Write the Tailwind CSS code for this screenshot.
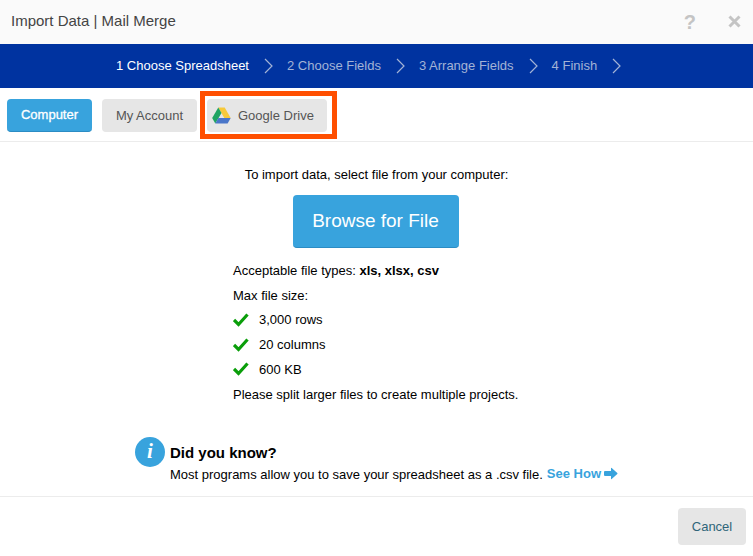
<!DOCTYPE html>
<html lang="en">
<head>
  <meta charset="UTF-8" />
  <title>Import Data | Mail Merge</title>
  <script src="https://cdn.jsdelivr.net/npm/@tailwindcss/browser@4"></script>
</head>
<body class="bg-white font-['Liberation_Sans',Arial,sans-serif] text-[13px] text-black">
  <div class="relative h-[556px] w-[753px] overflow-hidden">

    <!-- title bar -->
    <div class="flex h-[44px] items-center justify-between bg-[#fafafa] pb-[1px] pl-[11px] pr-[12px]">
      <h1 class="text-[15px] text-[#444]">Import Data | Mail Merge</h1>
      <div class="flex items-center gap-[32px] text-[#c4c4c4]">
        <span class="text-[20px] font-bold leading-none">?</span>
        <svg width="13" height="13" viewBox="0 0 13 13"><path d="M1.5 1.5l10 10M11.5 1.5l-10 10" stroke="#c4c4c4" stroke-width="3" fill="none"/></svg>
      </div>
    </div>

    <!-- steps -->
    <div class="flex h-[44px] items-center bg-[#0033a0] pl-[116px] text-[13px] text-[#a3b3d6]">
      <span class="text-white">1 Choose Spreadsheet</span>
      <svg class="ml-[15px] mr-[14px]" width="9" height="16" viewBox="0 0 9 16"><path d="M1 1l7 7-7 7" stroke="#a3b3d6" stroke-width="1.2" fill="none"/></svg>
      <span>2 Choose Fields</span>
      <svg class="ml-[15px] mr-[14px]" width="9" height="16" viewBox="0 0 9 16"><path d="M1 1l7 7-7 7" stroke="#a3b3d6" stroke-width="1.2" fill="none"/></svg>
      <span>3 Arrange Fields</span>
      <svg class="ml-[15px] mr-[14px]" width="9" height="16" viewBox="0 0 9 16"><path d="M1 1l7 7-7 7" stroke="#a3b3d6" stroke-width="1.2" fill="none"/></svg>
      <span>4 Finish</span>
      <svg class="ml-[15px]" width="9" height="16" viewBox="0 0 9 16"><path d="M1 1l7 7-7 7" stroke="#a3b3d6" stroke-width="1.2" fill="none"/></svg>
    </div>

    <!-- source tabs -->
    <div class="flex h-[54px] items-start gap-[10px] border-b border-[#ececec] pl-[7px] pt-[11px]">
      <button class="h-[33px] w-[85px] rounded-[4px] border-b border-[#2b8cc4] bg-[#38a3dd] text-white [-webkit-text-stroke:0.3px_white]">Computer</button>
      <button class="h-[33px] w-[95px] rounded-[4px] bg-[#e6e6e6] text-[#555]">My Account</button>
      <button class="flex h-[33px] w-[120px] items-center rounded-[4px] bg-[#e6e6e6] pl-[5px] text-[#555]">
        <svg width="19" height="17" viewBox="0 0 19 17">
          <path d="M6.3 0.5h6.4l6 10.4h-6.4z" fill="#f7c93a"/>
          <path d="M6.3 0.5l3.2 5.5-6.2 10.5L0.2 11z" fill="#1fa463"/>
          <path d="M3.3 16.5l3.1-5.6h12.3l-3.1 5.6z" fill="#4a76c9"/>
        </svg>
        <span class="ml-[7px]">Google Drive</span>
      </button>
    </div>

    <!-- highlight around Google Drive -->
    <div class="absolute left-[200px] top-[91px] h-[48px] w-[137px] border-[5px] border-[#ff4f00]"></div>

    <!-- main -->
    <div class="flex flex-col items-center pt-[24px]">
      <p class="h-[18px] leading-[18px]">To import data, select file from your computer:</p>
      <button class="mr-[2px] mt-[11px] h-[53px] w-[166px] rounded-[4px] border-b border-[#2b8cc4] bg-[#38a3dd] text-[19px] text-white">Browse for File</button>
    </div>

    <div class="ml-[233px] mt-[10.8px] leading-[24.8px]">
      <p>Acceptable file types: <b>xls, xlsx, csv</b></p>
      <p>Max file size:</p>
      <ul>
        <li class="flex items-center">
          <svg class="-mt-[2px] w-[26px]" width="16" height="14" viewBox="0 0 26 14"><path d="M1 7l4.5 4.5L14.5 1.5" stroke="#0a9e0a" stroke-width="3.2" fill="none"/></svg>3,000 rows
        </li>
        <li class="flex items-center">
          <svg class="-mt-[2px] w-[26px]" width="16" height="14" viewBox="0 0 26 14"><path d="M1 7l4.5 4.5L14.5 1.5" stroke="#0a9e0a" stroke-width="3.2" fill="none"/></svg>20 columns
        </li>
        <li class="flex items-center">
          <svg class="-mt-[2px] w-[26px]" width="16" height="14" viewBox="0 0 26 14"><path d="M1 7l4.5 4.5L14.5 1.5" stroke="#0a9e0a" stroke-width="3.2" fill="none"/></svg>600 KB
        </li>
      </ul>
      <p>Please split larger files to create multiple projects.</p>
    </div>

    <!-- did you know -->
    <div class="ml-[135px] mt-[24px] flex h-[64.2px] items-start gap-[5px]">
      <div class="mt-[5.2px] flex h-[30px] w-[30px] items-center justify-center rounded-full bg-[#38a3dd] font-['Liberation_Serif',serif] text-[21px] font-bold italic leading-none text-white">i</div>
      <div class="pt-[12.2px]">
        <p class="text-[15px] font-bold leading-[18px]">Did you know?</p>
        <p class="mt-[5px] flex items-center leading-[16px]">Most programs allow you to save your spreadsheet as a .csv file.
          <a class="relative -top-[1px] ml-[4px] flex items-center font-bold text-[#38a3dd]">See How
            <svg class="ml-[3px]" width="14" height="13" viewBox="0 0 14 13"><path d="M1 4h6V1.2q0-.8.7-.3l5.6 5.2q.4.4 0 .8L7.7 12.1q-.7.5-.7-.3V9H1q-1 0-1-1V5q0-1 1-1z" fill="#38a3dd"/></svg>
          </a>
        </p>
      </div>
    </div>

    <!-- footer -->
    <div class="flex justify-end border-t border-[#ececec] pr-[7px] pt-[11px]">
      <button class="h-[37px] w-[68px] rounded-[4px] bg-[#e6e6e6] text-[#2f6579]">Cancel</button>
    </div>
  </div>
</body>
</html>
